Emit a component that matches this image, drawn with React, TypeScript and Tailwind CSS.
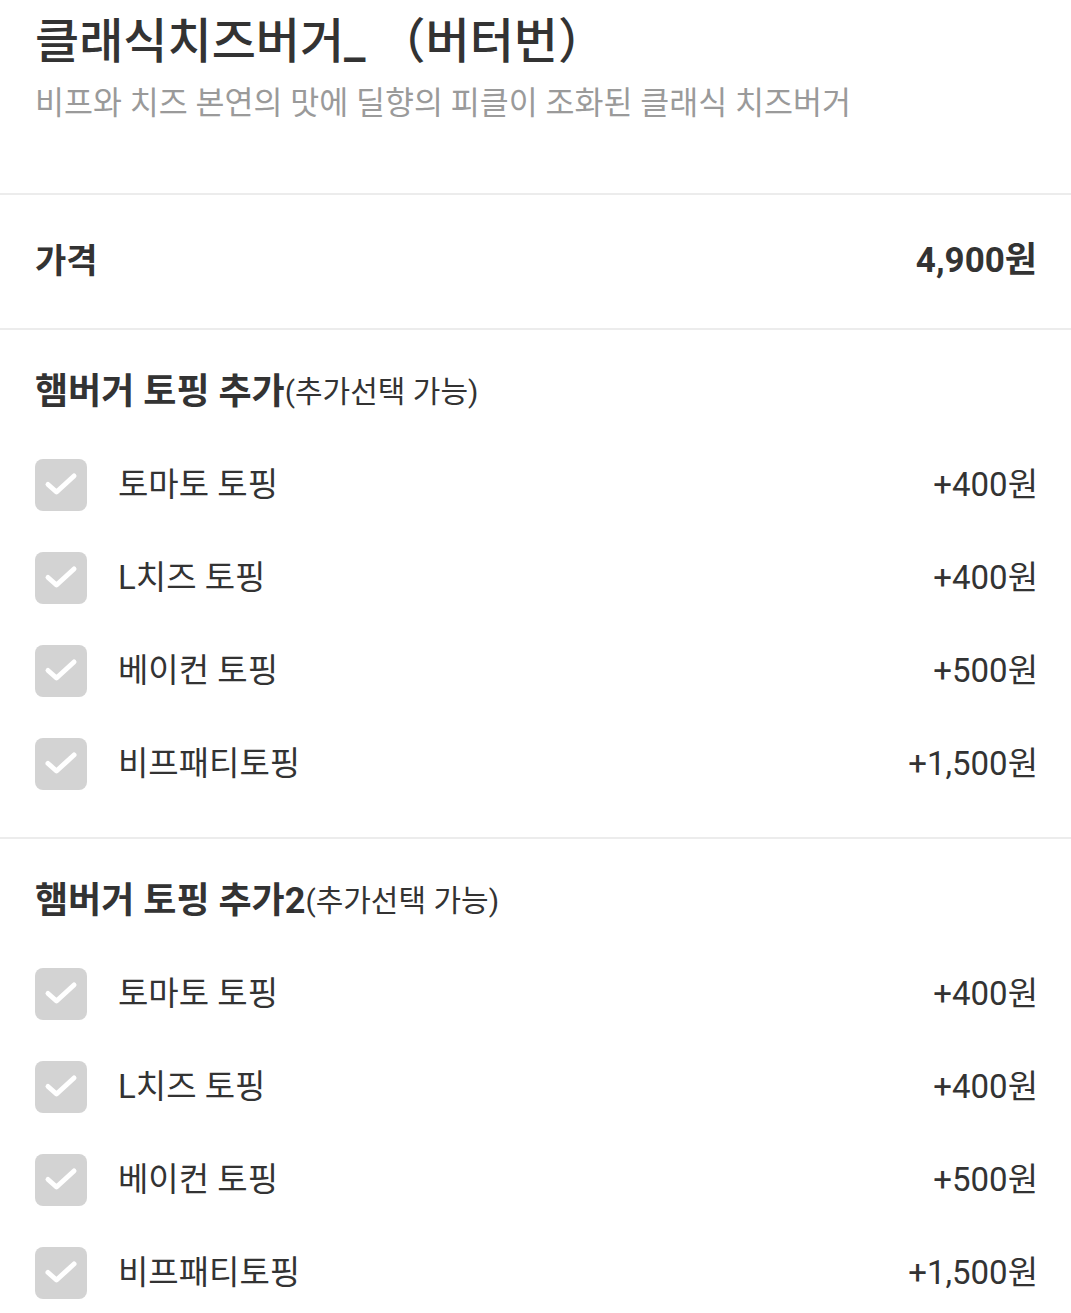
import React from "react";

type Option = { name: string; price: string };

const groups: { title: string; sub: string; options: Option[] }[] = [
  {
    title: "햄버거 토핑 추가",
    sub: "(추가선택 가능)",
    options: [
      { name: "토마토 토핑", price: "+400원" },
      { name: "L치즈 토핑", price: "+400원" },
      { name: "베이컨 토핑", price: "+500원" },
      { name: "비프패티토핑", price: "+1,500원" },
    ],
  },
  {
    title: "햄버거 토핑 추가2",
    sub: "(추가선택 가능)",
    options: [
      { name: "토마토 토핑", price: "+400원" },
      { name: "L치즈 토핑", price: "+400원" },
      { name: "베이컨 토핑", price: "+500원" },
      { name: "비프패티토핑", price: "+1,500원" },
    ],
  },
];

function CheckBox() {
  return (
    <div className="w-[52px] h-[52px] rounded-[8px] bg-[#d3d3d3] shrink-0">
      <svg width="52" height="52" viewBox="0 0 52 52" fill="none">
        <path d="M13 25.5l8.5 7.5L39 17" stroke="#fff" strokeWidth="5" strokeLinecap="round" strokeLinejoin="round" />
      </svg>
    </div>
  );
}

export default function App() {
  return (
    <div
      className="w-[1071px] bg-white text-[#333]"
      style={{ fontFamily: "Roboto, 'Noto Sans CJK KR', sans-serif" }}
    >
      {/* ── Title ── */}
      <div className="h-[193px] px-[35px] pt-[12px]">
        <h1 className="text-[48px] leading-[60px] font-medium text-[#333]">클래식치즈버거_ （버터번）</h1>
        <p className="mt-[12px] text-[31.5px] leading-[40px] text-[#9a9a9a]">
          비프와 치즈 본연의 맛에 딜향의 피클이 조화된 클래식 치즈버거
        </p>
      </div>
      <div className="h-[2px] bg-[#ececec]" />

      {/* ── Price ── */}
      <div className="h-[133px] pl-[35px] pr-[34px] flex items-center justify-between">
        <span className="text-[34px] font-bold">가격</span>
        <span className="text-[35px] font-bold">4,900원</span>
      </div>
      <div className="h-[2px] bg-[#ececec]" />

      {/* ── Option groups ── */}
      {groups.map((g, gi) => (
        <div key={gi}>
          <div className="pt-[15px] pb-[27px] pl-[35px] pr-[33px]">
            <div className="h-[93px] flex items-center">
              <span className="text-[36px] font-bold">{g.title}</span>
              <span className="text-[30px]">{g.sub}</span>
            </div>
            {g.options.map((o, oi) => (
              <div key={oi} className="h-[93px] flex items-center">
                <CheckBox />
                <span className="ml-[31px] text-[33px]">{o.name}</span>
                <span className="ml-auto text-[33px]">{o.price}</span>
              </div>
            ))}
          </div>
          {gi < groups.length - 1 && <div className="h-[2px] bg-[#ececec]" />}
        </div>
      ))}
    </div>
  );
}
